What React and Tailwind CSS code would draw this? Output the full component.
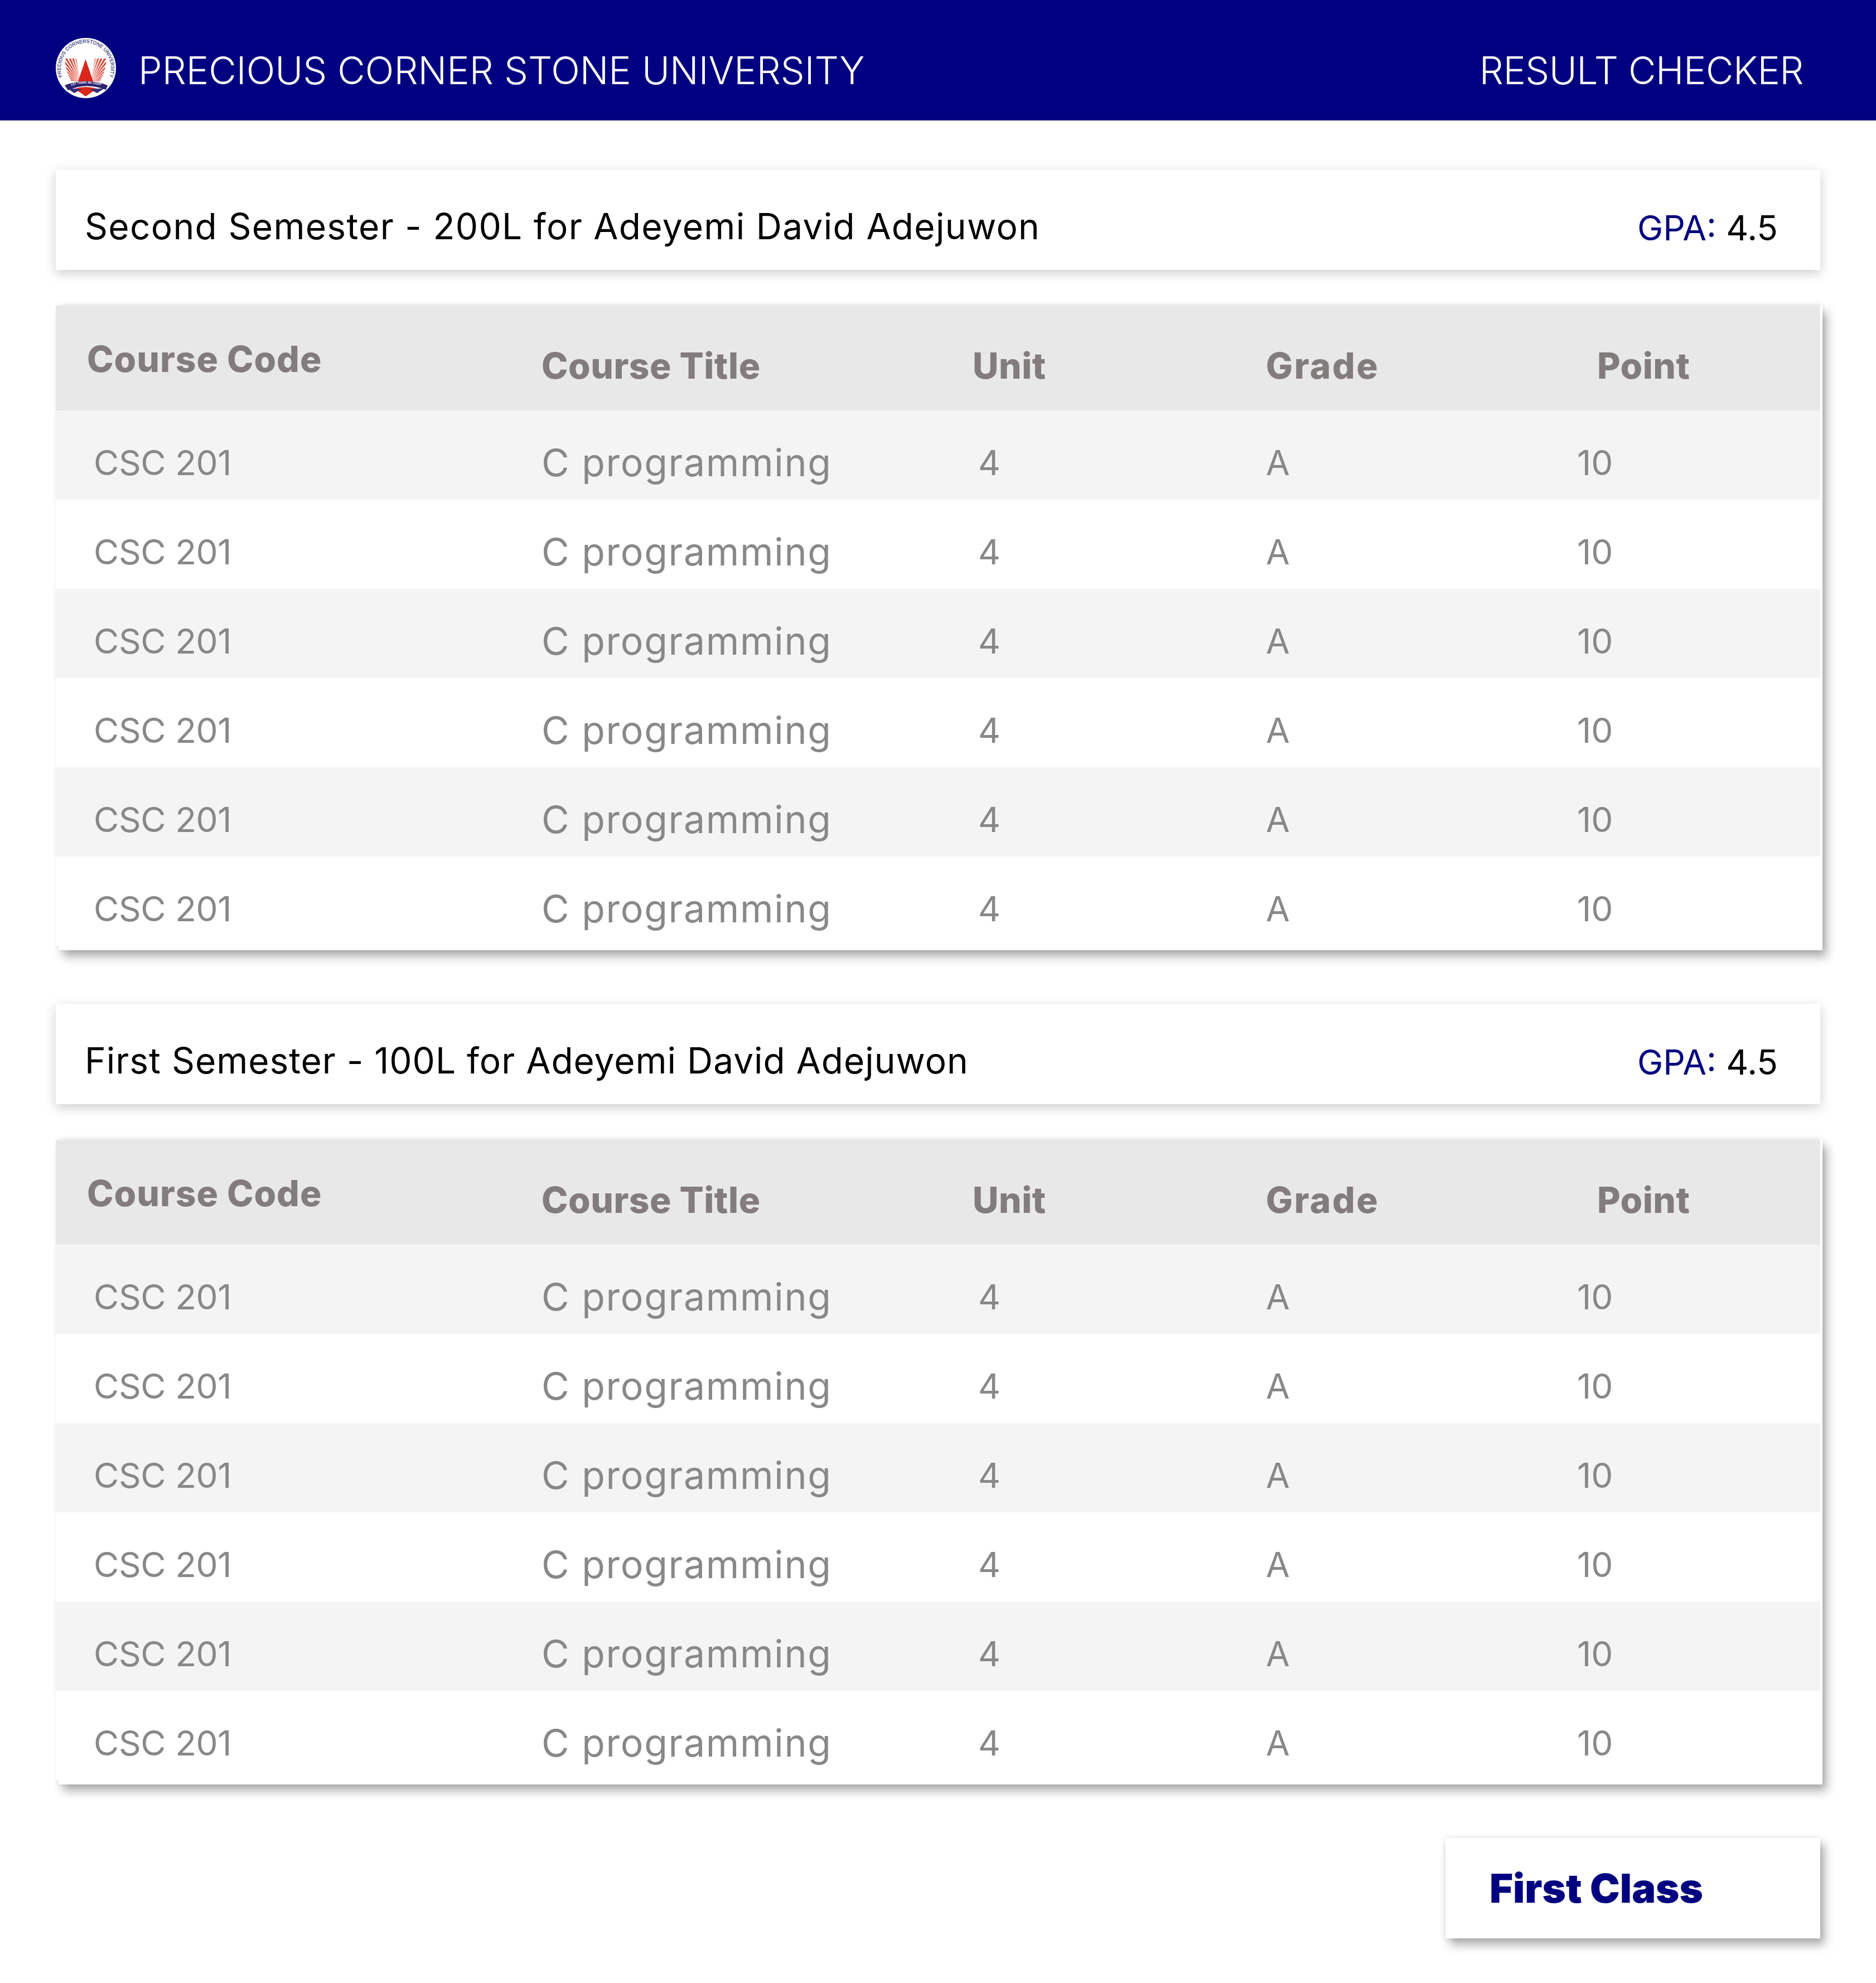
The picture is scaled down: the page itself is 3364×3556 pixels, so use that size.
import React from 'react';

const semesters = [
  { id: 'second', title: 'Second Semester - 200L for Adeyemi David Adejuwon', gpa: '4.5', titleClass: 'tracking-[1.3px]' },
  { id: 'first', title: 'First Semester - 100L for Adeyemi David Adejuwon', gpa: '4.5', titleClass: 'tracking-[0.97px]' },
];

const courses = [1, 2, 3, 4, 5, 6].map((id) => ({
  id,
  code: 'CSC 201',
  title: 'C programming',
  unit: '4',
  grade: 'A',
  point: '10',
}));

const gridCols = 'grid grid-cols-[871px_771px_528px_558px_436px]';

// wedges fanning out of a point under the peak, clipped to the left block
const rayWedges = Array.from({ length: 13 }, (_, i) => {
  const a = ((100 + i * 6.5) * Math.PI) / 180;
  const b = a + (3.6 * Math.PI) / 180;
  const p = (t) => `${(46 + 70 * Math.cos(t)).toFixed(1)} ${(82 - 70 * Math.sin(t)).toFixed(1)}`;
  return `M46 82 L${p(a)} L${p(b)} Z`;
});

const Rays = () => (
  <g fill="url(#rayFade)" clipPath="url(#raysClip)">
    {rayWedges.map((d) => (
      <path key={d} d={d} />
    ))}
  </g>
);

const Logo = () => (
  <svg viewBox="0 0 108 108" className="w-[108px] h-[108px] shrink-0">
    <defs>
      <path id="sealArc" d="M13.7 74 A45 45 0 1 1 94.3 74" />
      <path id="bannerArc" d="M24 87 Q54 76 85 87" />
      <clipPath id="raysClip">
        <path d="M16 37 L37 37 L44 78 L28 78 Q18 62 16 37 Z" />
      </clipPath>
      <linearGradient id="rayFade" gradientUnits="userSpaceOnUse" x1="30" y1="0" x2="45" y2="0">
        <stop offset="0" stopColor="#dd3a2a" />
        <stop offset="1" stopColor="#f3c4be" />
      </linearGradient>
    </defs>
    <circle cx="54" cy="54" r="54" fill="#ffffff" />
    <text fill="#2b2a78" stroke="#2b2a78" strokeWidth="0.15" fontFamily="Liberation Sans" fontSize="8.9">
      <textPath href="#sealArc" startOffset="50%" textAnchor="middle">PRECIOUS CORNERSTONE UNIVERSITY</textPath>
    </text>
    <Rays />
    <g transform="matrix(-1 0 0 1 107 0)">
      <Rays />
    </g>
    <path d="M53.5 38 L67 78 L40 78 Z" fill="#d9271b" />
    <path d="M34 91 Q54 85 74 91 L53.5 105 Z" fill="#d9271b" />
    <path d="M20 90 L33 99 L46 92 Z M88 90 L74 99 L61 92 Z" fill="#34307e" />
    <path d="M16 85 Q54 70 93 85 L90 93 Q54 79 22 94 Z" fill="#2b2370" />
    <text fill="#ffffff" fontFamily="Liberation Sans" fontWeight="700" fontSize="5.2">
      <textPath href="#bannerArc" startOffset="50%" textAnchor="middle">LET THERE BE LIGHT</textPath>
    </text>
  </svg>
);

const ResultTable = () => (
  <div className="ml-[5px] w-[3163px] bg-white pb-[8px] shadow-[8px_12px_16px_rgba(0,0,0,0.3),0_0_10px_rgba(0,0,0,0.12)]">
    <div className="-ml-[5px] w-[3164px]">
      <div className={`${gridCols} h-[188px] items-center bg-[#e8e8e8] pt-[28px] text-[64px] font-extrabold text-[#827c7c] tracking-[0.5px]`}>
        <div className="pl-[56px] mb-[24px] tracking-[1px]">Course Code</div>
        <div>Course Title</div>
        <div className="pl-[2px]">Unit</div>
        <div className="tracking-[2.5px]">Grade</div>
        <div className="pl-[36px]">Point</div>
      </div>
      {courses.map((c, i) => (
        <div
          key={c.id}
          className={`${gridCols} h-[160px] items-center pt-[26px] text-[62px] font-normal text-[#888888] ${i % 2 === 0 ? 'bg-[#f4f4f4]' : 'bg-white'}`}
        >
          <div className="pl-[68px] tracking-[-0.4px]">{c.code}</div>
          <div className="text-[68px] tracking-[1.7px]">{c.title}</div>
          <div className="pl-[12px]">{c.unit}</div>
          <div>{c.grade}</div>
          <div>{c.point}</div>
        </div>
      ))}
    </div>
  </div>
);

const SemesterBlock = ({ title, gpa, titleClass }) => (
  <section>
    <div className="flex h-[180px] items-center justify-between bg-white pt-[24px] pl-[52px] pr-[76px] shadow-[0_6px_20px_rgba(0,0,0,0.2)]">
      <h2 className={`text-[64px] text-black font-normal ${titleClass}`}>{title}</h2>
      <p className="pt-[5px] text-[62px] text-black">
        <span className="text-[#000080]">GPA:</span> {gpa}
      </p>
    </div>
    <div className="mt-[64px]">
      <ResultTable />
    </div>
  </section>
);

export default function App() {
  return (
    <div className="w-[3364px] h-[3556px] bg-white font-['Inter',sans-serif]">
      <header className="flex h-[216px] items-center justify-between bg-[#000080] pt-[28px] pl-[100px] pr-[130px] text-white">
        <div className="flex items-center gap-[40px]">
          <Logo />
          <h1 className="pt-[8px] text-[68px] font-light">PRECIOUS CORNER STONE UNIVERSITY</h1>
        </div>
        <h1 className="pt-[8px] text-[68px] font-light tracking-[-0.5px]">RESULT CHECKER</h1>
      </header>

      <main className="px-[100px] pt-[88px]">
        <div className="flex flex-col gap-[96px]">
          {semesters.map((s) => (
            <SemesterBlock key={s.id} title={s.title} gpa={s.gpa} titleClass={s.titleClass} />
          ))}
        </div>
        <div className="mt-[96px] flex justify-end">
          <div className="flex h-[180px] w-[672px] items-center bg-white pl-[79px] text-[72px] font-black text-[#000080] shadow-[8px_12px_16px_rgba(0,0,0,0.3),0_0_10px_rgba(0,0,0,0.12)]">
            First Class
          </div>
        </div>
      </main>
    </div>
  );
}
